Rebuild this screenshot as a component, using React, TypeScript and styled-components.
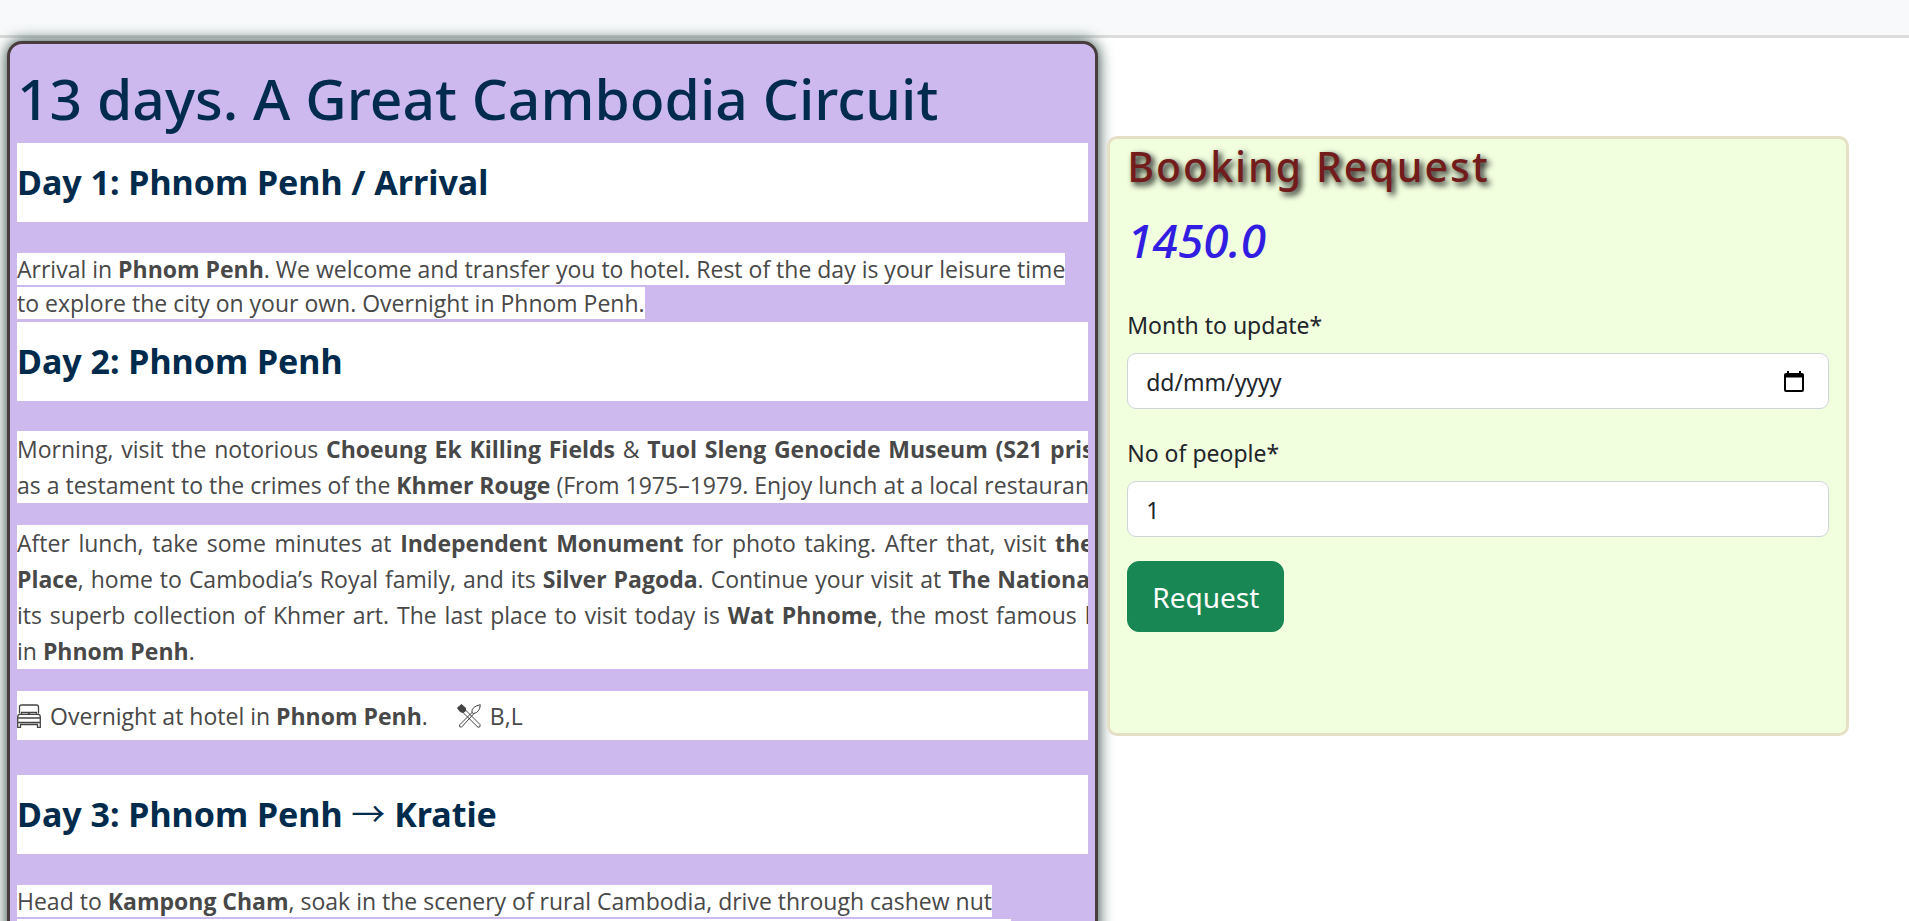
import React from "react";
import styled, { createGlobalStyle } from "styled-components";

const GlobalStyle = createGlobalStyle`
  *, *::before, *::after { box-sizing: border-box; }
  body {
    margin: 0;
    background: #fff;
    color: #212529;
    font: 400 23px/36px "Noto Sans", "Open Sans", sans-serif;
  }
  h1, h2, h3, p { margin: 0; }
`;

const Page = styled.div`
  height: 100vh;
  overflow: hidden;
`;

const NavBar = styled.nav`
  height: 38px;
  background: #f8f9fa;
  border-bottom: 3px solid #dcdcdc;
`;

const Columns = styled.main`
  display: flex;
  align-items: flex-start;
`;

const Itinerary = styled.article`
  flex: 0 0 auto;
  width: calc(58% - 16px);
  margin: 3px 9px 0 7px;
  padding: 18px 7px;
  border: 3px solid #483d3c;
  border-radius: 15px;
  background: #cdb9ee;
  box-shadow: 0 0 15px #1f3d36;
  font-family: "Open Sans", "Noto Sans", sans-serif;
`;

const Title = styled.h1`
  margin-bottom: 8px;
  color: #002b4c;
  font-family: "Noto Sans", "Open Sans", sans-serif;
  font-size: 57px;
  font-weight: 500;
  line-height: 73px;
`;

const DayHeading = styled.h2<{ $spaced?: boolean }>`
  margin-top: ${(p) => (p.$spaced ? 35 : 0)}px;
  margin-bottom: 30px;
  padding: 20px 0;
  background: #fff;
  color: #002b4c;
  font-family: "Noto Sans", "Open Sans", sans-serif;
  font-size: 34px;
  font-weight: 700;
  line-height: 39px;
`;

const Arrow = styled.span`
  font-family: "Noto Sans CJK SC", sans-serif;
  font-weight: 400;
  line-height: 1;
`;

const Intro = styled.p`
  padding-bottom: 2px;
  color: #484848;
  line-height: 34px;
`;

const Highlight = styled.span`
  background: #fff;
`;

const Details = styled.p`
  margin-bottom: 22px;
  overflow: hidden;
  background: #fff;
  color: #484848;
`;

const Line = styled.span<{ $justified?: boolean }>`
  display: block;
  width: calc(100% + 122px);
  white-space: nowrap;
  text-align-last: ${(p) => (p.$justified ? "justify" : "left")};
`;

const Stay = styled.p`
  display: flex;
  align-items: center;
  gap: 9px;
  height: 49px;
  background: #fff;
  color: #484848;

  svg { flex: none; }
`;

const Meals = styled.span`
  display: inline-flex;
  align-items: center;
  gap: 9px;
  margin-left: 20px;
`;

const Booking = styled.section`
  flex: 1;
  min-height: 600px;
  margin: 98px 60px 0 0;
  padding: 0 17px;
  border: 3px solid #e4dfc5;
  border-radius: 10px;
  background: #f1ffdf;
`;

const BookingTitle = styled.h2`
  color: #721c1c;
  font-size: 41px;
  font-weight: 500;
  line-height: 55px;
  letter-spacing: 2px;
  text-shadow: 3px 3px 6px #000;
`;

const Price = styled.h3`
  margin: 17px 0 36px;
  color: #321ee1;
  font-size: 46px;
  font-style: italic;
  font-weight: 500;
  line-height: 58px;
`;

const Label = styled.label`
  display: block;
  margin-bottom: 10px;
  padding-top: 2px;
`;

const Field = styled.div`
  display: flex;
  align-items: center;
  height: 56px;
  margin-bottom: 24px;
  padding: 2px 24px 0 18px;
  border: 1px solid #ced4da;
  border-radius: 9px;
  background: #fff;
`;

const Input = styled.input`
  flex: 1;
  min-width: 0;
  padding: 0;
  border: 0;
  outline: 0;
  background: none;
  color: #212529;
  font: inherit;

  &::placeholder { color: #212529; opacity: 1; }
`;

const PickerButton = styled.button`
  display: flex;
  padding: 0;
  border: 0;
  background: none;
`;

const SubmitButton = styled.button`
  height: 71px;
  padding: 0 24px;
  border: 1px solid #198754;
  border-radius: 12px;
  background: #198754;
  color: #fff;
  font: inherit;
  font-size: 28px;
`;

const BedIcon = () => (
  <svg width="24" height="24" viewBox="0 0 24 24" fill="none" stroke="#444" strokeWidth="1.3" aria-hidden="true">
    <path d="M2.500 9.500V3Q2.500 1 4.500 1H19.500Q21.500 1 21.500 3V9.500" />
    <path d="M4.500 10V8.500H11.500V10M12.500 10V8.500H19.500V10" />
    <path d="M.7 23.300V13Q.7 10.300 3 10.300H21Q23.300 10.300 23.300 13V23.300H20.500V20.500H3.500V23.300ZM.7 14H23.300M.7 18.500H23.300" />
  </svg>
);

const CutleryIcon = () => (
  <svg width="24" height="24" viewBox="0 0 24 24" fill="none" stroke="#444" strokeWidth="1" aria-hidden="true">
    <path d="M.5 4L2.500 2L4.500.5L8.500 4V7L6 8.500L3 7.500Z" fill="#444" />
    <path d="M8 5.500L23 20.500Q24 23.500 21 23.300L5.500 8" />
    <path d="M14.800 8.500Q14.500 2.500 23.300.7Q23 8.500 16.500 9.500ZM15 8.500L2.500 21Q2 23.500 4.500 23.200L17 9.500" />
  </svg>
);

const CalendarIcon = () => (
  <svg width="20" height="22" viewBox="0 0 20 22" aria-hidden="true">
    <path d="M3 0H5V2H15V0H17V2H18Q20 2 20 4V19Q20 21 18 21H2Q0 21 0 19V4Q0 2 2 2H3ZM2 6.500V19H18V6.500Z" fill="#000" fillRule="evenodd" />
  </svg>
);

export default function App() {
  return (
    <Page>
      <GlobalStyle />
      <NavBar aria-label="Main" />
      <Columns>
        <Itinerary>
          <Title>13 days. A Great Cambodia Circuit</Title>

          <DayHeading>Day 1: Phnom Penh / Arrival</DayHeading>
          <Intro>
            <Highlight>
              Arrival in <b>Phnom Penh</b>. We welcome and transfer you to hotel. Rest of the day is your leisure time
              <br />
              to explore the city on your own. Overnight in Phnom Penh.
            </Highlight>
          </Intro>

          <DayHeading>Day 2: Phnom Penh</DayHeading>
          <Details>
            <Line $justified>
              Morning, visit the notorious <b>Choeung Ek Killing Fields</b> &amp; <b>Tuol Sleng Genocide Museum (S21 prison)</b> served
            </Line>
            <Line>
              as a testament to the crimes of the <b>Khmer Rouge</b> (From 1975–1979. Enjoy lunch at a local restaurant.
            </Line>
          </Details>
          <Details>
            <Line $justified>
              After lunch, take some minutes at <b>Independent Monument</b> for photo taking. After that, visit <b>the old Royal</b>
            </Line>
            <Line $justified>
              <b>Place</b>, home to Cambodia’s Royal family, and its <b>Silver Pagoda</b>. Continue your visit at <b>The National Museum,</b>
            </Line>
            <Line $justified>
              its superb collection of Khmer art. The last place to visit today is <b>Wat Phnome</b>, the most famous hill temples
            </Line>
            <Line>
              in <b>Phnom Penh</b>.
            </Line>
          </Details>
          <Stay>
            <BedIcon />
            <span>Overnight at hotel in <b>Phnom Penh</b>.</span>
            <Meals>
              <CutleryIcon />
              B,L
            </Meals>
          </Stay>

          <DayHeading $spaced>
            Day 3: Phnom Penh <Arrow>→</Arrow> Kratie
          </DayHeading>
          <Intro>
            <Highlight>
              Head to <b>Kampong Cham</b>, soak in the scenery of rural Cambodia, drive through cashew nut
              <br />
              and rubber plantations, and stop to visit the old bamboo bridge and its few riverside temples
            </Highlight>
          </Intro>
        </Itinerary>

        <Booking>
          <BookingTitle>Booking Request</BookingTitle>
          <Price>1450.0</Price>
          <form onSubmit={(e) => e.preventDefault()}>
            <Label htmlFor="month">Month to update*</Label>
            <Field>
              <Input id="month" type="text" placeholder="dd/mm/yyyy" />
              <PickerButton type="button" aria-label="Open calendar">
                <CalendarIcon />
              </PickerButton>
            </Field>
            <Label htmlFor="people">No of people*</Label>
            <Field>
              <Input id="people" type="text" inputMode="numeric" defaultValue="1" />
            </Field>
            <SubmitButton type="submit">Request</SubmitButton>
          </form>
        </Booking>
      </Columns>
    </Page>
  );
}
